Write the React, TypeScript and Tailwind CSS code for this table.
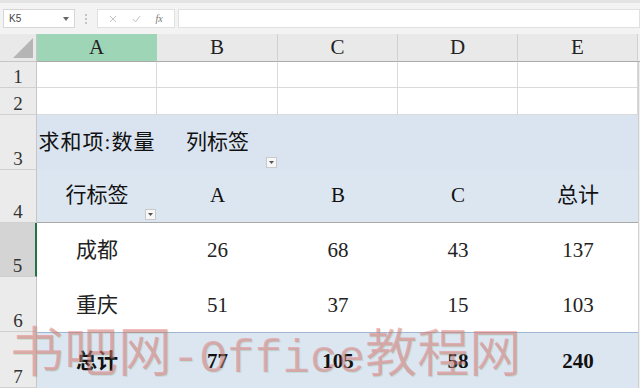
import React from 'react';

const cols = ['A', 'B', 'C', 'D', 'E'];

function Drop() {
  return (
    <div className="absolute right-[1px] bottom-[2px] w-[11px] h-[11px] bg-[#f7f7f7] border border-[#c9c9c9] flex items-center justify-center">
      <svg width="5" height="3" viewBox="0 0 5 3">
        <path d="M0 0h5L2.5 3z" fill="#555" />
      </svg>
    </div>
  );
}

function RowHead({ n, selected = false }: { n: number; selected?: boolean }) {
  return (
    <div
      className={`flex items-end justify-center pb-[1px] text-[19px] leading-none text-[#333] border-b border-[#d0d0d0] ${
        selected ? 'bg-[#d4d4d4] border-r-2 border-r-[#217346]' : 'bg-[#ebebeb] border-r border-r-[#c6c6c6]'
      }`}
    >
      {n}
    </div>
  );
}

export default function App() {
  const data = [
    { name: '成都', v: [26, 68, 43, 137] },
    { name: '重庆', v: [51, 37, 15, 103] },
  ];

  return (
    <div
      className="relative w-[640px] h-[388px] overflow-hidden bg-white"
      style={{ fontFamily: '"Liberation Serif", "Noto Sans CJK SC", serif' }}
    >
      {/* formula bar */}
      <div className="h-[34px] bg-[#f3f3f3] border-t-[3px] border-[#e4e4e4] flex items-start pt-[6px] pl-[3px] font-['Liberation_Sans',sans-serif]">
        <div className="w-[72px] h-[19px] bg-white border border-[#d6d6d6] flex items-center justify-between px-[5px]">
          <span className="text-[10px] text-[#444]">K5</span>
          <svg width="6" height="4" viewBox="0 0 6 4">
            <path d="M0 0h6L3 4z" fill="#666" />
          </svg>
        </div>
        <div className="w-[22px] h-[19px] flex flex-col items-center justify-center gap-[2px]">
          <span className="w-[2px] h-[2px] bg-[#c4c4c4]" />
          <span className="w-[2px] h-[2px] bg-[#c4c4c4]" />
          <span className="w-[2px] h-[2px] bg-[#c4c4c4]" />
        </div>
        <div className="w-[78px] h-[19px] bg-white border border-[#e0e0e0] flex items-center justify-around px-[4px]">
          <svg width="8" height="8" viewBox="0 0 8 8">
            <path d="M1 1l6 6M7 1L1 7" stroke="#c4c4c4" strokeWidth="1" />
          </svg>
          <svg width="9" height="8" viewBox="0 0 9 8">
            <path d="M1 4l2.5 3L8 1" stroke="#c4c4c4" strokeWidth="1" fill="none" />
          </svg>
          <span className="text-[10px] italic text-[#777] font-['Liberation_Serif',serif]">fx</span>
        </div>
        <div className="ml-[3px] flex-1 h-[19px] bg-white border border-[#e0e0e0]" />
      </div>

      {/* sheet */}
      <div className="grid grid-cols-[37px_120px_121px_120px_120px_120px_2px] grid-rows-[28px_26px_27px_55px_53px_54px_55px_56px]">
        {/* header row */}
        <div className="relative bg-[#e9e9e9] border-b border-r border-[#c6c6c6]">
          <svg className="absolute right-[3px] bottom-[3px]" width="20" height="20" viewBox="0 0 20 20">
            <path d="M20 0v20H0z" fill="#b5b5b5" />
          </svg>
        </div>
        {cols.map((c, i) => (
          <div
            key={c}
            className={`flex items-center justify-center text-[21px] text-[#222] border-b border-[#ababab] ${
              i === 0 ? 'bg-[#9fd5b7] border-r border-r-[#9fd5b7]' : 'bg-[#e9e9e9] border-r border-r-[#d0d0d0]'
            }`}
          >
            {c}
          </div>
        ))}
        <div className="bg-[#f0f0f0] border-b border-[#ababab]" />

        {/* rows 1-2 */}
        {[1, 2].map((r) => (
          <React.Fragment key={r}>
            <RowHead n={r} />
            {cols.map((c) => (
              <div key={c} className="border-r border-b border-[#dadada]" />
            ))}
            <div className="bg-[#f0f0f0] border-l border-[#cfcfcf]" />
          </React.Fragment>
        ))}

        {/* row 3 */}
        <RowHead n={3} />
        <div className="bg-[#dae4f0] flex items-center justify-center text-[21px] tracking-[1px] text-[#111] whitespace-nowrap">
          求和项:数量
        </div>
        <div className="relative bg-[#dae4f0] flex items-center justify-center text-[21px] text-[#111]">
          列标签
          <Drop />
        </div>
        <div className="bg-[#dae4f0]" />
        <div className="bg-[#dae4f0]" />
        <div className="bg-[#dae4f0]" />
        <div className="bg-[#f0f0f0] border-l border-[#cfcfcf]" />

        {/* row 4 */}
        <RowHead n={4} />
        <div className="relative bg-[#dce6f1] border-b border-[#a9a9a9] flex items-center justify-center text-[21px] text-[#111]">
          行标签
          <Drop />
        </div>
        {['A', 'B', 'C', '总计'].map((t) => (
          <div
            key={t}
            className="bg-[#dce6f1] border-b border-[#a9a9a9] flex items-center justify-center text-[21px] text-[#111]"
          >
            {t}
          </div>
        ))}
        <div className="bg-[#f0f0f0] border-l border-[#cfcfcf]" />

        {/* rows 5-6 */}
        {data.map((d, i) => (
          <React.Fragment key={d.name}>
            <RowHead n={5 + i} selected={i === 0} />
            <div className="flex items-center justify-center pt-[2px] text-[21px] text-[#222]">{d.name}</div>
            {d.v.map((v, j) => (
              <div key={j} className="flex items-center justify-center pt-[2px] text-[21px] text-[#222]">
                {v}
              </div>
            ))}
            <div className="bg-[#f0f0f0] border-l border-[#cfcfcf]" />
          </React.Fragment>
        ))}

        {/* row 7 */}
        <RowHead n={7} />
        <div className="bg-[#dce6f1] border-t border-[#9fb6d2] flex items-center justify-center pt-[2px] text-[21px] font-bold text-[#111]">
          总计
        </div>
        {[77, 105, 58, 240].map((v) => (
          <div
            key={v}
            className="bg-[#dce6f1] border-t border-[#9fb6d2] flex items-center justify-center pt-[2px] text-[21px] font-bold text-[#111]"
          >
            {v}
          </div>
        ))}
        <div className="bg-[#f0f0f0] border-l border-[#cfcfcf]" />
      </div>

      {/* watermark */}
      <div
        className="absolute left-[10px] top-[322px] flex items-baseline leading-none whitespace-nowrap text-[rgba(228,105,105,0.45)] pointer-events-none"
        style={{ fontFamily: '"Noto Sans CJK SC", "Liberation Mono", monospace', textShadow: '1px 1px 0 rgba(120,190,150,0.25)' }}
      >
        <span className="text-[54px]">书吧网</span>
        <span className="text-[46px] font-['Liberation_Mono',monospace]">-Office</span>
        <span className="text-[52px]">教程网</span>
      </div>
    </div>
  );
}
